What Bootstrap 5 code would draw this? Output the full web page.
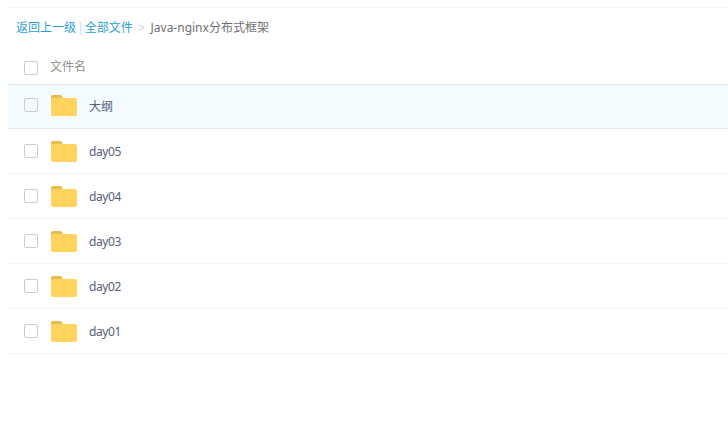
<!DOCTYPE html>
<html lang="zh"><head><meta charset="utf-8"><title>文件</title>
<link href="https://cdn.jsdelivr.net/npm/bootstrap@5.3.0/dist/css/bootstrap.min.css" rel="stylesheet">
<style>
html,body{background:#fff;overflow:hidden}
body{font-family:"Noto Sans","Noto Sans CJK SC",sans-serif;font-size:12px;color:#56607a;height:433px}
.page-wrap{padding:7px 0 0 8px}
.crumbs{border-top:1px solid #f2f4f6;height:37px;padding:4px 0 0 8px;color:#6f6f6f}
.crumbs a{color:#2b9fd6;text-decoration:none}
.crumbs .sep{color:#c5d8f3;margin:0 1px}
.crumbs .gt{color:#c8ccd2;margin:0 5.5px}
.head-row{height:40px;color:#8f8f8f;padding:5px 0 0 16px}
.head-row .tick{margin-top:2px;margin-right:12px}
.file-row{height:45px;border-bottom:1px solid #f2f6fd;padding-left:16px}
.file-row.picked{height:45px;background:#f4fbff;border-top:1px solid #dfeaf3;border-bottom:1px solid #dfeaf3}
.tick{width:14px;height:14px;border:1px solid #c8ccd4;border-radius:2px;background:#fff;flex:none;margin-right:13px}
.picked .tick{background:#f6fafc;margin-top:-3px}
.fold{width:26px;height:21px;flex:none;margin:1px 12px 0 0}
.picked .fold{margin-top:-2px}
.fname{margin-top:2px;letter-spacing:-.4px}
.picked .fname{margin-top:0;letter-spacing:0}
</style></head><body>
<div class="page-wrap">
<div class="crumbs d-flex align-items-center"><a href="#">返回上一级</a><span class="sep">|</span><a href="#">全部文件</a><span class="gt">&gt;</span><span>Java-nginx分布式框架</span></div>
<div class="head-row d-flex align-items-center"><span class="tick"></span><span>文件名</span></div>
<div class="file-row picked d-flex align-items-center"><span class="tick"></span><svg class="fold" viewBox="0 0 26 21"><path d="M0 2Q0 0 2 0H9Q11 0 11.7 3H24Q26 3 26 5V19Q26 21 24 21H2Q0 21 0 19Z" fill="#ffd35c"/><path d="M0 2Q0 0 2 0H9Q11 0 11.7 3H2Q0 3 0 5Z" fill="#e8bc50"/></svg><span class="fname">大纲</span></div>
<div class="file-row d-flex align-items-center"><span class="tick"></span><svg class="fold" viewBox="0 0 26 21"><path d="M0 2Q0 0 2 0H9Q11 0 11.7 3H24Q26 3 26 5V19Q26 21 24 21H2Q0 21 0 19Z" fill="#ffd35c"/><path d="M0 2Q0 0 2 0H9Q11 0 11.7 3H2Q0 3 0 5Z" fill="#e8bc50"/></svg><span class="fname">day05</span></div>
<div class="file-row d-flex align-items-center"><span class="tick"></span><svg class="fold" viewBox="0 0 26 21"><path d="M0 2Q0 0 2 0H9Q11 0 11.7 3H24Q26 3 26 5V19Q26 21 24 21H2Q0 21 0 19Z" fill="#ffd35c"/><path d="M0 2Q0 0 2 0H9Q11 0 11.7 3H2Q0 3 0 5Z" fill="#e8bc50"/></svg><span class="fname">day04</span></div>
<div class="file-row d-flex align-items-center"><span class="tick"></span><svg class="fold" viewBox="0 0 26 21"><path d="M0 2Q0 0 2 0H9Q11 0 11.7 3H24Q26 3 26 5V19Q26 21 24 21H2Q0 21 0 19Z" fill="#ffd35c"/><path d="M0 2Q0 0 2 0H9Q11 0 11.7 3H2Q0 3 0 5Z" fill="#e8bc50"/></svg><span class="fname">day03</span></div>
<div class="file-row d-flex align-items-center"><span class="tick"></span><svg class="fold" viewBox="0 0 26 21"><path d="M0 2Q0 0 2 0H9Q11 0 11.7 3H24Q26 3 26 5V19Q26 21 24 21H2Q0 21 0 19Z" fill="#ffd35c"/><path d="M0 2Q0 0 2 0H9Q11 0 11.7 3H2Q0 3 0 5Z" fill="#e8bc50"/></svg><span class="fname">day02</span></div>
<div class="file-row d-flex align-items-center"><span class="tick"></span><svg class="fold" viewBox="0 0 26 21"><path d="M0 2Q0 0 2 0H9Q11 0 11.7 3H24Q26 3 26 5V19Q26 21 24 21H2Q0 21 0 19Z" fill="#ffd35c"/><path d="M0 2Q0 0 2 0H9Q11 0 11.7 3H2Q0 3 0 5Z" fill="#e8bc50"/></svg><span class="fname">day01</span></div>
</div>
<script src="https://cdn.jsdelivr.net/npm/bootstrap@5.3.0/dist/js/bootstrap.bundle.min.js"></script>
</body></html>
